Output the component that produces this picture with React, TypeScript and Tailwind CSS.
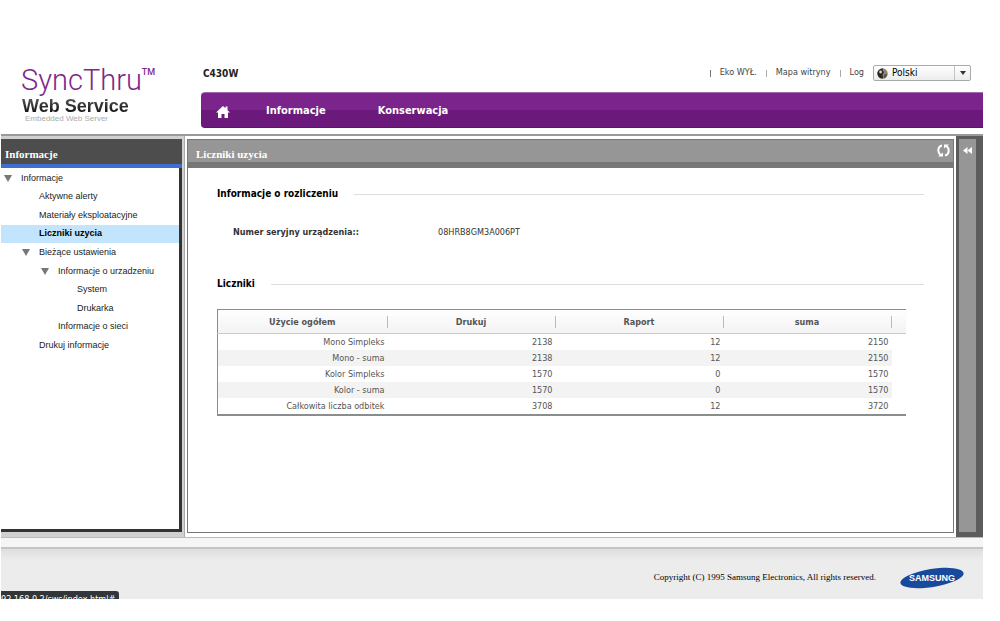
import React from "react";
import clsx from "clsx";

type TreeItem = {
    label: string;
    indent: string;
    branch?: boolean;
    active?: boolean;
};

const treeItems: TreeItem[] = [
    { label: "Informacje", indent: "pl-[3px]", branch: true },
    { label: "Aktywne alerty", indent: "pl-[38px]" },
    { label: "Materiały eksploatacyjne", indent: "pl-[38px]" },
    { label: "Liczniki uzycia", indent: "pl-[38px]", active: true },
    { label: "Bieżące ustawienia", indent: "pl-[21px]", branch: true },
    { label: "Informacje o urzadzeniu", indent: "pl-10", branch: true },
    { label: "System", indent: "pl-[76px]" },
    { label: "Drukarka", indent: "pl-[76px]" },
    { label: "Informacje o sieci", indent: "pl-[57px]" },
    { label: "Drukuj informacje", indent: "pl-[38px]" },
];

const columns = ["Użycie ogółem", "Drukuj", "Raport", "suma"];

const rows = [
    ["Mono Simpleks", "2138", "12", "2150"],
    ["Mono - suma", "2138", "12", "2150"],
    ["Kolor Simpleks", "1570", "0", "1570"],
    ["Kolor - suma", "1570", "0", "1570"],
    ["Całkowita liczba odbitek", "3708", "12", "3720"],
];

const Header = () => (
    <header className="flex h-[134px] pl-5 pt-[62px]">
        {/* LEFT: product logo */}
        <a href="#" className="block w-[180px] shrink-0">
            <div className="flex font-['Roboto'] text-[#7b2a8b]">
                <span className="text-[29px] leading-[37px] font-light">SyncThru</span>
                <span className="pt-[6px] text-[9px] leading-[9px] font-medium">TM</span>
            </div>
            <div className="bg-linear-to-b from-[#555] to-[#111] bg-clip-text pl-px font-['Liberation_Sans'] text-[18px] leading-[14px] font-bold text-transparent">
                Web Service
            </div>
            <div className="pl-1 font-['Liberation_Sans'] text-[8px] leading-[12px] text-[#aaa]">
                Embedded Web Server
            </div>
        </a>

        {/* RIGHT: model, tools and main menu */}
        <div className="flex-1">
            <div className="flex h-[22px] items-center pr-3">
                <span className="pl-[2px] text-[10px] font-bold text-[#222]">C430W</span>
                <div className="ml-auto flex items-center gap-[9px] text-[9px] text-[#444]">
                    <span className="h-[7px] w-px bg-[#777]" />
                    <a href="#">Eko WYŁ.</a>
                    <span className="h-[7px] w-px bg-[#aaa]" />
                    <a href="#">Mapa witryny</a>
                    <span className="h-[7px] w-px bg-[#aaa]" />
                    <a href="#">Log</a>
                    <div className="relative">
                        <select
                            aria-label="Język"
                            className="h-4 w-[98px] appearance-none rounded-[2px] border border-[#aaa] bg-linear-to-b from-white to-[#ececec] pl-[18px] text-[10px] leading-[14px] text-black"
                        >
                            <option>Polski</option>
                        </select>
                        <svg className="pointer-events-none absolute left-1 top-[3px]" width="11" height="11" viewBox="0 0 11 11">
                            <circle cx="5.5" cy="5.5" r="5.2" fill="#8d857a" />
                            <path d="M.6 4Q2.500 .3 6 .4L5.500 2.500L7 4L5.500 6.500L6 10.500Q1 10.500 .4 5.500Z" fill="#2b2521" />
                            <circle cx="3.600" cy="4" r="1.400" fill="#d9d4cb" />
                            <path d="M7.500 6L10.500 6.500Q9.500 9.800 6.500 10.500Z" fill="#5a524a" />
                        </svg>
                        <svg className="pointer-events-none absolute right-0 top-px" width="17" height="14" viewBox="0 0 17 14">
                            <path d="M.5 0V14" stroke="#c4c4c4" />
                            <path d="M6 5H12L9 9Z" fill="#333" />
                        </svg>
                    </div>
                </div>
            </div>
            <nav className="mt-2 flex h-9 items-center rounded-l-[4px] border-t border-b border-t-[#a568b2] border-b-[#5a1668] bg-linear-to-b from-[#7b248c] from-50% to-[#6b1a7b] to-50% pt-[3px] pl-[15px] text-[11px] font-bold text-white">
                <a href="#" aria-label="Home" className="mr-9">
                    <svg width="14" height="14" viewBox="0 0 14 14" fill="white">
                        <path d="M7 1L9.500 3.300V1.500H11.500V5.200L14 7.500H12V13H8.500V9H5.500V13H2V7.500H0Z" />
                    </svg>
                </a>
                <a href="#" className="mr-[52px]">Informacje</a>
                <a href="#">Konserwacja</a>
            </nav>
        </div>
    </header>
);

const Sidebar = () => (
    <aside className="mt-[3px] mb-[5px] w-[181px] shrink-0 border-r-[3px] border-b-[3px] border-[#333] bg-white">
        <h2 className="-mr-[3px] h-[29px] border-b-4 border-[#3d6fd0] bg-[#4d4d4d] pl-1 font-['Liberation_Serif'] text-[11px] leading-[30px] font-bold text-white">
            Informacje
        </h2>
        <ul className="mt-px grid h-[186px] auto-rows-fr font-['Liberation_Sans'] text-[9px] text-[#222]">
            {treeItems.map((item) => (
                <li
                    key={item.label}
                    className={clsx("flex items-center", item.indent, item.active && "bg-[#c2e5fd] font-bold text-black")}
                >
                    {item.branch && (
                        <svg className="mr-[9px]" width="8" height="7" viewBox="0 0 8 7" fill="#777">
                            <path d="M0 0H8L4 7Z" />
                        </svg>
                    )}
                    <a href="#">{item.label}</a>
                </li>
            ))}
        </ul>
    </aside>
);

const SectionTitle = ({ children }: { children: React.ReactNode }) => (
    <div className="flex items-center gap-4">
        <h3 className="text-[10px] leading-4 font-bold text-black">{children}</h3>
        <div className="h-px flex-1 bg-[#ddd]" />
    </div>
);

const CountersTable = () => (
    <table className="mt-[17px] table-fixed border-t border-b-2 border-l border-[#8a8d8d] text-[9px] text-[#555]">
        <colgroup>
            <col className="w-[170px]" />
            <col className="w-[168px]" />
            <col className="w-[168px]" />
            <col className="w-[168px]" />
            <col className="w-[14px]" />
        </colgroup>
        <thead>
            <tr className="h-6 border-b border-[#ccc] bg-linear-to-b from-white to-[#f3f3f3]">
                {columns.map((column) => (
                    <th key={column} className="p-0">
                        <div className="border-r border-[#bbb] leading-3">{column}</div>
                    </th>
                ))}
                <td />
            </tr>
        </thead>
        <tbody>
            {rows.map((row) => (
                <tr key={row[0]} className="group h-4">
                    {row.map((cell, i) => (
                        <td key={i} className="p-0 pr-[3px] text-right leading-4 group-even:bg-[#f3f3f3]">
                            {cell}
                        </td>
                    ))}
                    <td />
                </tr>
            ))}
        </tbody>
    </table>
);

const Content = () => (
    <div className="ml-[2px] flex flex-1 border-l border-[#aaa] bg-white pl-[2px] pt-[3px] pr-[2px] pb-1">
        <main className="flex-1 border border-[#777]">
            <div className="flex h-[28px] justify-between border-b-[6px] border-[#777] bg-[#969696] pl-2 pr-[3px]">
                <h1 className="font-['Liberation_Serif'] text-[11px] leading-[28px] font-bold text-white">
                    Liczniki uzycia
                </h1>
                <button aria-label="Odśwież" className="pb-px">
                    <svg width="13" height="13" viewBox="0 0 13 13" fill="none" stroke="white" strokeWidth="2">
                        <path d="M5 1.500Q1.300 2.500 1.300 6.500Q1.300 9 3.500 11" />
                        <path d="M8 11.500Q11.700 10.500 11.700 6.500Q11.700 4 9.500 2" />
                        <path d="M1 12.500H6V8.500ZM12 .5H7V4.500Z" fill="white" stroke="none" />
                    </svg>
                </button>
            </div>
            <div className="px-[29px] pt-[18px]">
                <SectionTitle>Informacje o rozliczeniu</SectionTitle>
                <dl className="mt-[22px] flex pl-4 text-[9px] leading-4 text-[#333]">
                    <dt className="w-[205px] font-bold">Numer seryjny urządzenia::</dt>
                    <dd>08HRB8GM3A006PT</dd>
                </dl>
                <div className="mt-9">
                    <SectionTitle>Liczniki</SectionTitle>
                </div>
                <CountersTable />
            </div>
        </main>
    </div>
);

const Footer = () => (
    <footer className="relative h-[62px] overflow-hidden border-t border-[#bbb] bg-[#ececec]">
        <div className="h-[11px] border-b-2 border-[#c4c4c4] bg-[#f5f5f5]" />
        <div className="flex h-[57px] items-center justify-end gap-6 bg-linear-to-b from-[#dedede] to-[#ececec] to-20% pr-[19px]">
            <p className="font-['Liberation_Serif'] text-[9px] text-black">
                Copyright (C) 1995 Samsung Electronics, All rights reserved.
            </p>
            <svg width="64" height="24" viewBox="0 0 64 24" role="img" aria-label="Samsung">
                <ellipse cx="32" cy="12" rx="32" ry="9" fill="#174a9c" transform="rotate(-9 32 12)" />
                <text
                    x="32"
                    y="15"
                    textAnchor="middle"
                    fontFamily="Liberation Sans"
                    fontWeight="bold"
                    fontSize="9"
                    fill="white"
                >
                    SAMSUNG
                </text>
            </svg>
        </div>
        {/* browser's link status bubble */}
        <div className="absolute left-0 top-[53px] h-4 w-[118px] rounded-tr-[3px] bg-[#333639] text-[9px] leading-4 text-white">
            92.168.0.2/sws/index.html#
        </div>
    </footer>
);

const App = () => (
    <div className="min-h-screen bg-white pl-px pr-[17px] pb-[22px] font-['DejaVu_Sans_Condensed','Noto_Sans',sans-serif]">
        <Header />
        <div className="flex min-h-[403px] border-t-2 border-[#999] bg-[#d0d0d0]">
            <Sidebar />
            <Content />
            <div className="flex w-[27px] border-r-[7px] border-t-[3px] border-b-[5px] border-l-[3px] border-[#5c5c5c] bg-[#969696]">
                <button aria-label="Rozwiń panel" className="mt-2 self-start pl-1">
                    <svg width="9" height="7" viewBox="0 0 9 7" fill="white">
                        <path d="M4.500 0V7L0 3.500ZM9 0V7L4.500 3.500Z" />
                    </svg>
                </button>
            </div>
        </div>
        <Footer />
    </div>
);

export default App;
